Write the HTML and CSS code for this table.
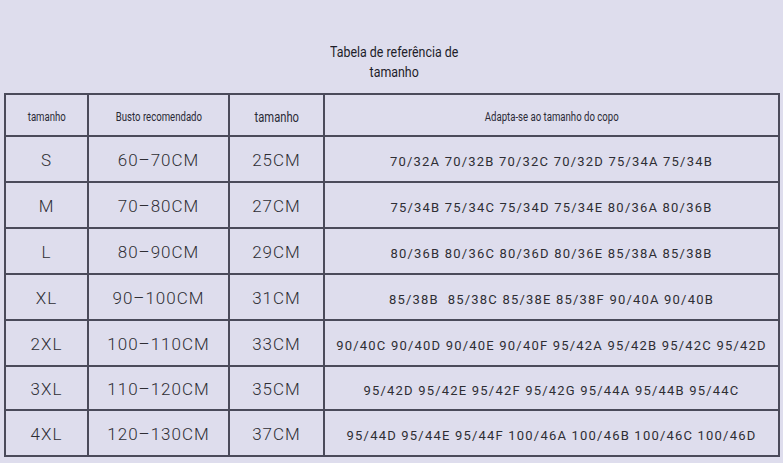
FILE: index.html
```html
<!DOCTYPE html>
<html lang="pt">
<head>
<meta charset="utf-8">
<title>Tabela de referência de tamanho</title>
<link rel="stylesheet" href="styles.css">
</head>
<body>
<div class="page">
  <h1 class="title"><span class="cond">Tabela de referência de<br>tamanho</span></h1>
  <table class="size-table">
    <colgroup>
      <col class="c1"><col class="c2"><col class="c3"><col class="c4">
    </colgroup>
    <thead>
      <tr class="head-row">
        <th class="h-small"><span class="cond">tamanho</span></th>
        <th class="h-small"><span class="cond">Busto recomendado</span></th>
        <th class="h-big"><span class="cond">tamanho</span></th>
        <th class="h-small"><span class="cond">Adapta-se ao tamanho do copo</span></th>
      </tr>
    </thead>
    <tbody>
      <tr><td>S</td><td>60–70CM</td><td>25CM</td><td class="cups">70/32A 70/32B 70/32C 70/32D 75/34A 75/34B</td></tr>
      <tr><td>M</td><td>70–80CM</td><td>27CM</td><td class="cups">75/34B 75/34C 75/34D 75/34E 80/36A 80/36B</td></tr>
      <tr><td>L</td><td>80–90CM</td><td>29CM</td><td class="cups">80/36B 80/36C 80/36D 80/36E 85/38A 85/38B</td></tr>
      <tr><td>XL</td><td>90–100CM</td><td>31CM</td><td class="cups">85/38B&nbsp; 85/38C 85/38E 85/38F 90/40A 90/40B</td></tr>
      <tr><td>2XL</td><td>100–110CM</td><td>33CM</td><td class="cups">90/40C 90/40D 90/40E 90/40F 95/42A 95/42B 95/42C 95/42D</td></tr>
      <tr><td>3XL</td><td>110–120CM</td><td>35CM</td><td class="cups">95/42D 95/42E 95/42F 95/42G 95/44A 95/44B 95/44C</td></tr>
      <tr><td>4XL</td><td>120–130CM</td><td>37CM</td><td class="cups">95/44D 95/44E 95/44F 100/46A 100/46B 100/46C 100/46D</td></tr>
    </tbody>
  </table>
</div>
</body>
</html>
```
FILE: styles.css
```css
html, body {
  margin: 0;
  padding: 0;
  background: #dedded;
}

.page {
  width: 783px;
  height: 463px;
  overflow: hidden;
  padding-top: 42px;
  box-sizing: border-box;
}

.cond {
  display: inline-block;
  font-family: Roboto, "Liberation Sans", sans-serif;
  transform: scaleX(0.8);
  transform-origin: center;
}

.title {
  margin: 0;
  padding-left: 6px;
  text-align: center;
  font-weight: 400;
  font-size: 15.5px;
  line-height: 20px;
  color: #1e1e2a;
}

.size-table {
  margin: 11px 0 0 4px;
  width: 774px;
  border-collapse: collapse;
  table-layout: fixed;
}

.c1 { width: 83px; }
.c2 { width: 141px; }
.c3 { width: 95px; }
.c4 { width: 455px; }

.size-table th,
.size-table td {
  border: 2px solid #4a4a5a;
  text-align: center;
  vertical-align: middle;
  padding: 0;
  white-space: nowrap;
}

.head-row { height: 42px; }

.size-table th {
  font-weight: normal;
  color: #2a2a36;
  padding-top: 5px;
}

.h-small { font-size: 12px; }
.h-big { font-size: 14px; }

.size-table tbody tr { height: 46px; }
.size-table tbody tr:nth-child(6) { height: 44px; }

.size-table td {
  font-family: Roboto, "Liberation Sans", Arial, sans-serif;
  font-weight: 300;
  font-size: 17px;
  letter-spacing: 1px;
  color: #2e2e34;
  padding-top: 2px;
}

.size-table td.cups {
  font-size: 13px;
  font-weight: 400;
  letter-spacing: 1.2px;
  color: #2e2e34;
  padding-top: 4px;
}
```
